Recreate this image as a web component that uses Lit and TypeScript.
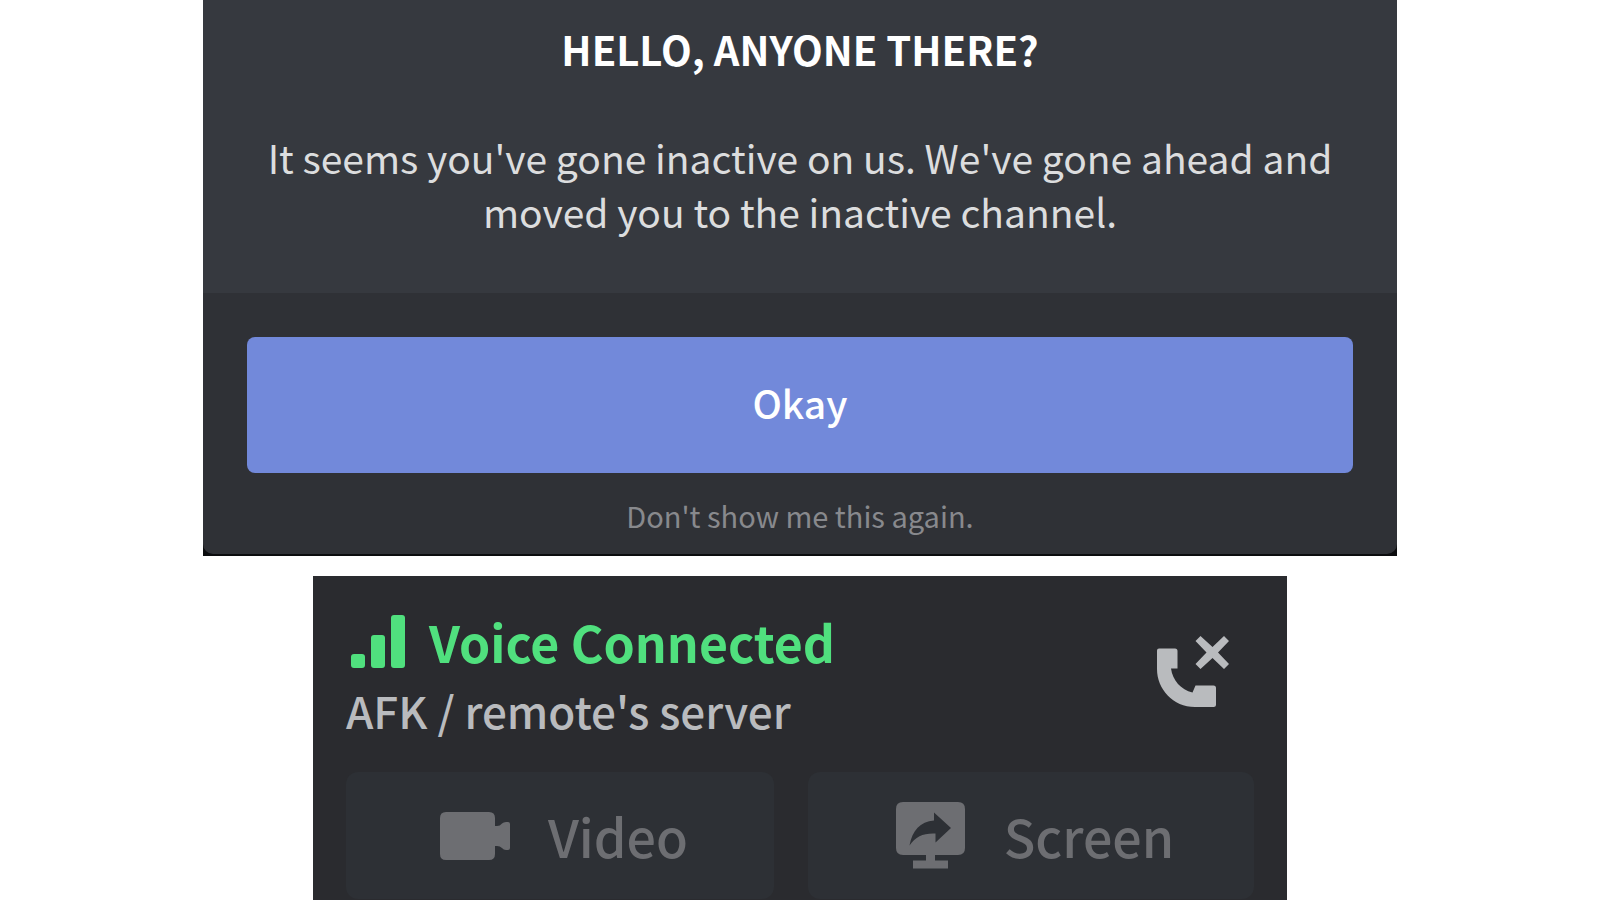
import { LitElement, html, css } from "lit";
import { customElement } from "lit/decorators.js";

const fontStack = css`"Noto Sans CJK SC", "Noto Sans", sans-serif`;

@customElement("afk-dialog")
export class AfkDialog extends LitElement {
  static styles = css`
    :host {
      display: block;
      background: #0b0c0e;
      padding-bottom: 2px;
      font-family: ${fontStack};
      text-align: center;
    }
    .dialog {
      border-radius: 0 0 10px 10px;
      overflow: hidden;
      background: #2f3136;
    }
    .body {
      background: #36393f;
      padding: 25px 44px 55px;
    }
    .title {
      margin: 0 0 57px;
      color: #fff;
      font-size: 40px;
      line-height: 48px;
      font-weight: 700;
      text-transform: uppercase;
    }
    .message {
      margin: 0;
      color: #dcddde;
      font-size: 39px;
      line-height: 54px;
    }
    .footer {
      display: flex;
      flex-direction: column;
      align-items: center;
      gap: 22px;
      padding: 44px 44px 19px;
    }
    .confirm {
      width: 100%;
      height: 136px;
      border: 0;
      border-radius: 8px;
      padding: 0 0 6px;
      background: #7289da;
      color: #fff;
      font-family: inherit;
      font-size: 39px;
      font-weight: 500;
      cursor: pointer;
    }
    .dismiss {
      border: 0;
      padding: 0;
      background: none;
      color: #88898d;
      font-family: inherit;
      font-size: 29px;
      line-height: 40px;
      cursor: pointer;
    }
  `;

  render() {
    return html`
      <section class="dialog" role="dialog" aria-labelledby="title">
        <div class="body">
          <h1 class="title" id="title">Hello, anyone there?</h1>
          <p class="message">
            It seems you've gone inactive on us. We've gone ahead and moved you
            to the inactive channel.
          </p>
        </div>
        <div class="footer">
          <button class="confirm" type="button">Okay</button>
          <button class="dismiss" type="button">Don't show me this again.</button>
        </div>
      </section>
    `;
  }
}

@customElement("voice-panel")
export class VoicePanel extends LitElement {
  static styles = css`
    :host {
      display: block;
      box-sizing: border-box;
      padding: 35px 33px 1px;
      background: #2a2b2f;
      font-family: ${fontStack};
    }
    .header {
      display: flex;
      align-items: center;
      justify-content: space-between;
      padding-right: 25px;
      margin-bottom: 33px;
    }
    .info {
      display: flex;
      flex-direction: column;
      gap: 10px;
    }
    .status {
      display: flex;
      align-items: center;
      gap: 24px;
      padding-left: 5px;
      color: #50e07e;
      font-size: 50px;
      line-height: 60px;
      font-weight: 700;
    }
    .channel {
      color: #b9bbbe;
      font-size: 44px;
      line-height: 58px;
      font-weight: 500;
      text-decoration: none;
    }
    .hangup {
      display: flex;
      border: 0;
      padding: 0 0 6px;
      background: none;
      color: #b9bbbe;
      cursor: pointer;
    }
    .actions {
      display: grid;
      grid-template-columns: 428fr 446fr;
      gap: 34px;
    }
    .action {
      display: flex;
      align-items: center;
      justify-content: center;
      gap: 38px;
      height: 127px;
      border: 0;
      border-radius: 12px;
      padding: 0 0 0 8px;
      background: #2d3035;
      color: #6d6e72;
      font-family: inherit;
      font-size: 52px;
      font-weight: 500;
    }
    svg {
      display: block;
      flex: none;
      fill: currentColor;
    }
  `;

  render() {
    return html`
      <header class="header">
        <div class="info">
          <div class="status">
            <svg width="54" height="54" viewBox="0 0 54 54" aria-hidden="true">
              <rect x="0" y="40" width="14" height="14" rx="3" />
              <rect x="20" y="21" width="14" height="33" rx="3" />
              <rect x="40" y="1" width="14" height="53" rx="3" />
            </svg>
            <span>Voice Connected</span>
          </div>
          <a class="channel" href="#">AFK / remote's server</a>
        </div>
        <button class="hangup" type="button" aria-label="Disconnect">
          <svg width="72" height="72" viewBox="0 0 72 72" aria-hidden="true">
            <path
              d="M2 12.500H18Q20.500 12.500 20.500 15V32.500H14C15.500 44 24 54 35.500 56.500L38.500 49.500H56.500Q59 49.500 59 52V68.500Q59 71 56.500 71H38C16 71 0 53 0 33V14.500Q0 12.500 2 12.500Z"
            />
            <path
              d="M43.500 0L55.500 11L67 0L72 5L61 16.500L72 28L67 33L55.500 22L43.500 33L38.500 28L49.500 16.500L38.500 5Z"
            />
          </svg>
        </button>
      </header>
      <div class="actions">
        <button class="action" type="button">
          <svg width="70" height="48" viewBox="0 0 70 48" aria-hidden="true">
            <path
              d="M6 0H49Q55 0 55 6V14H57Q60 14 62 11.500Q63.500 10 66 10H68Q70 10 70 12V36Q70 38 68 38H66Q63.500 38 62 36Q60 34 57 34H55V42Q55 48 49 48H6Q0 48 0 42V6Q0 0 6 0Z"
            />
          </svg>
          <span>Video</span>
        </button>
        <button class="action" type="button">
          <svg width="70" height="67" viewBox="0 0 70 67" aria-hidden="true">
            <path
              fill-rule="evenodd"
              d="M7 0H62Q69 0 69 7V46Q69 53 62 53H39V58.500H52V66.500H17V58.500H30V53H7Q0 53 0 46V7Q0 0 7 0ZM38 10.500V18.500C24 20 16.500 28 13.500 43.500C20 34.500 27 31 39.500 31.500V40.500L55 26Z"
            />
          </svg>
          <span>Screen</span>
        </button>
      </div>
    `;
  }
}

@customElement("app-root")
export class AppRoot extends LitElement {
  static styles = css`
    :host {
      display: flex;
      flex-direction: column;
      align-items: center;
      gap: 20px;
      background: #fff;
    }
    .dialog {
      width: 100%;
      max-width: 1194px;
    }
    .panel {
      width: 100%;
      max-width: 974px;
    }
  `;

  render() {
    return html`
      <afk-dialog class="dialog"></afk-dialog>
      <voice-panel class="panel"></voice-panel>
    `;
  }
}
